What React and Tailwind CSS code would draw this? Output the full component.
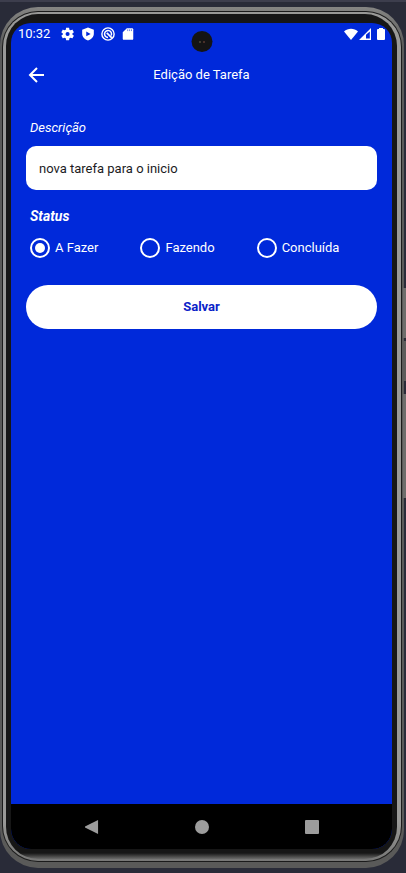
import { useState } from "react";

const OPTIONS = ["A Fazer", "Fazendo", "Concluída"];

function StatusBar() {
  return (
    <div className="flex h-[22px] shrink-0 items-center justify-between pr-[7px] pl-[7px] text-white">
      <div className="flex items-center">
        <span className="w-[43px] text-[13px] leading-5">10:32</span>
        <div className="flex items-center gap-[6px]">
          <svg className="size-[14px]" viewBox="0 0 24 24" fill="currentColor" aria-hidden="true">
            <path d="M19.43 12.98c.04-.32.07-.64.07-.98s-.03-.66-.07-.98l2.3-1.8c.2-.16.26-.43.13-.66l-2.2-3.8c-.13-.24-.4-.32-.64-.24l-2.75 1.1c-.56-.43-1.18-.8-1.85-1.07L14 1.6a.5.5 0 0 0-.5-.43h-4.4c-.25 0-.46.18-.5.43l-.4 2.95c-.68.28-1.3.65-1.86 1.07L3.6 4.52c-.24-.09-.5 0-.64.24L.76 8.56c-.13.23-.08.5.13.66l2.3 1.8c-.04.32-.07.65-.07.98s.03.66.07.98l-2.3 1.8c-.2.16-.26.43-.13.66l2.2 3.8c.13.24.4.32.64.24l2.74-1.1c.57.43 1.18.8 1.86 1.07l.4 2.95c.04.25.25.43.5.43h4.4c.25 0 .46-.18.5-.43l.42-2.95a7.7 7.7 0 0 0 1.85-1.07l2.75 1.1c.24.09.5 0 .64-.24l2.2-3.8c.13-.23.07-.5-.13-.66zM11.3 15.5a3.500 3.500 0 1 1 0-7 3.500 3.500 0 0 1 0 7z" />
          </svg>
          <svg className="size-[14px]" viewBox="0 0 24 24" fill="currentColor" aria-hidden="true">
            <path fillRule="evenodd" d="M12 1 2 4.600v7C2 17 6.600 21.600 12 23c5.400-1.400 10-6 10-11.400v-7zM9 7.500v8.500l7.500-4.200z" />
          </svg>
          <svg className="size-[14px]" viewBox="0 0 24 24" fill="none" stroke="currentColor" aria-hidden="true">
            <circle cx="12" cy="12" r="10.500" strokeWidth="2.400" />
            <path d="M17.500 14.500A6 6 0 1 0 12 18" strokeWidth="2.600" />
            <path d="m10 10 8.500 8.500" strokeWidth="3" />
          </svg>
          <svg className="size-[14px]" viewBox="0 0 24 24" aria-hidden="true">
            <path fill="currentColor" d="M10 2h9a2 2 0 0 1 2 2v16a2 2 0 0 1-2 2H5a2 2 0 0 1-2-2V9z" />
            <path className="stroke-[#0029da]" d="M11.500 4v3M14.800 4v3M18 4v3" strokeWidth="1" />
          </svg>
        </div>
      </div>
      <div className="flex items-center">
        <svg className="h-3 w-[14px]" viewBox="0 0 14 12" fill="currentColor" aria-hidden="true">
          <path d="M7 12 0 3.500C3.800-.3 10.200-.3 14 3.500z" />
        </svg>
        <svg className="ml-px h-3 w-3" viewBox="0 0 12 12" aria-hidden="true">
          <path fill="currentColor" fillRule="evenodd" d="M12 0v12H0zM10.800 3.500v7H7V6.800z" />
        </svg>
        <svg className="ml-[6px] h-3 w-2" viewBox="0 0 8 12" fill="currentColor" aria-hidden="true">
          <path d="M2 0h4v1h1a1 1 0 0 1 1 1v9a1 1 0 0 1-1 1H1a1 1 0 0 1-1-1V2a1 1 0 0 1 1-1h1z" />
        </svg>
      </div>
    </div>
  );
}

function Header() {
  return (
    <header className="grid h-[60px] shrink-0 grid-cols-[1fr_auto_1fr] items-center px-4 text-white">
      <button type="button" aria-label="Voltar" className="flex size-5 items-center justify-center">
        <svg className="size-5" viewBox="0 0 20 20" fill="none" stroke="currentColor" strokeWidth="2" aria-hidden="true">
          <path d="M17 10H4M10 3l-7 7 7 7" />
        </svg>
      </button>
      <h1 className="text-[13px] leading-5">Edição de Tarefa</h1>
    </header>
  );
}

function TaskForm() {
  const [description, setDescription] = useState("nova tarefa para o inicio");
  const [status, setStatus] = useState("A Fazer");
  return (
    <form className="flex flex-1 flex-col px-[15px] pt-[13px]" onSubmit={(e) => e.preventDefault()}>
      <label htmlFor="description" className="pl-1 text-[13px] leading-5 text-white italic">
        Descrição
      </label>
      <input
        id="description"
        type="text"
        value={description}
        onChange={(e) => setDescription(e.target.value)}
        className="mt-2 h-11 w-full rounded-[10px] bg-white px-[13px] text-[13px] text-[#1c1c1e] outline-none"
      />
      <fieldset className="mt-4">
        <legend className="pl-1 text-[14px] leading-5 font-bold text-white italic">Status</legend>
        <div className="mt-3 flex gap-[42px] pl-1">
          {OPTIONS.map((option) => (
            <label key={option} className="flex items-center gap-[5px] text-[13px] leading-5 text-white">
              <input
                type="radio"
                name="status"
                value={option}
                checked={status === option}
                onChange={() => setStatus(option)}
                className="m-0 grid size-5 appearance-none place-items-center rounded-full border-2 border-white before:size-[10px] before:rounded-full checked:before:bg-white"
              />
              {option}
            </label>
          ))}
        </div>
      </fieldset>
      <button type="submit" className="mt-[27px] h-11 w-full rounded-full bg-white text-[13px] font-bold text-[#0a22c8]">
        Salvar
      </button>
    </form>
  );
}

function NavigationBar() {
  return (
    <nav className="flex h-[45px] shrink-0 items-center justify-center gap-24 bg-black text-[#9c9c9c]">
      <button type="button" aria-label="Voltar">
        <svg className="size-[14px]" viewBox="0 0 15 15" fill="currentColor" aria-hidden="true">
          <path d="M14 0v15L0 8V7z" />
        </svg>
      </button>
      <button type="button" aria-label="Início" className="size-[14px] rounded-full bg-[#9c9c9c]" />
      <button type="button" aria-label="Recentes" className="size-[14px] rounded-[1px] bg-[#9c9c9c]" />
    </nav>
  );
}

export default function App() {
  return (
    <div className="relative flex min-h-screen flex-col border-t-2 border-[#3d3e4d] bg-[#292b38] pt-[5px] pr-[2px] pb-[5px] font-[Roboto,sans-serif]">
      <div className="absolute top-[286px] right-0 h-[50px] w-[3px] bg-[#6e6e6c]" />
      <div className="absolute top-[339px] right-0 h-10 w-[3px] bg-[#5c5c5b]" />
      <div className="absolute top-[392px] right-0 h-[104px] w-[3px] bg-[#6e6e6c]" />
      <div className="flex flex-1 flex-col rounded-[38px] bg-[linear-gradient(#858583,#5a5a59_40px)] px-[2px] pt-1 pb-[6px]">
        <div className="flex flex-1 flex-col rounded-[36px] bg-[#1b1b1b] p-px">
          <div className="flex flex-1 flex-col rounded-[35px] bg-[linear-gradient(to_top,#777776,#999997_40px)] pt-[2px] pr-1 pb-[2px] pl-[3px]">
            <div className="flex flex-1 flex-col rounded-[32px] bg-[linear-gradient(to_top,#6c6c6b_0px,#161616_6px)] pt-[9px] pr-[5px] pb-[10px] pl-[5px]">
              <main className="relative flex flex-1 flex-col overflow-hidden rounded-[20px] bg-[#0029da]">
                <StatusBar />
                <div className="absolute top-2 left-1/2 flex size-[21px] -translate-x-1/2 items-center justify-center gap-[3px] rounded-full bg-[#141414]">
                  <span className="h-[2px] w-px bg-[#6b6546]" />
                  <span className="h-[2px] w-px bg-[#7c4a3c]" />
                </div>
                <Header />
                <TaskForm />
                <NavigationBar />
              </main>
            </div>
          </div>
        </div>
      </div>
    </div>
  );
}
